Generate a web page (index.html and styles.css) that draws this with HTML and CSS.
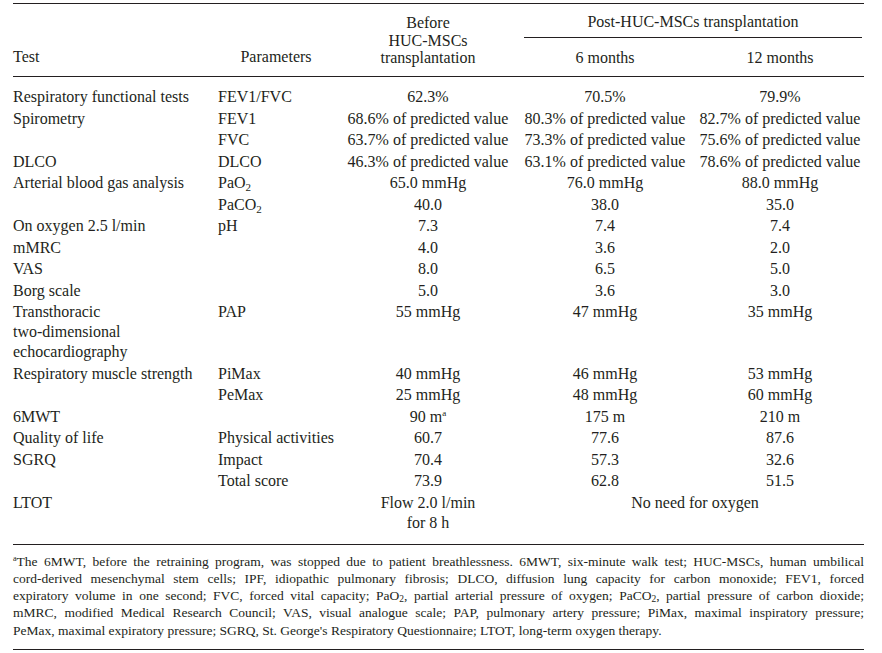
FILE: index.html
```html
<!DOCTYPE html>
<html>
<head>
<meta charset="utf-8">
<link rel="stylesheet" href="styles.css">
</head>
<body>
<div class="page">
<table class="data">
<colgroup>
<col class="c-test"><col class="c-param"><col class="c-before"><col class="c-six"><col class="c-twelve">
</colgroup>
<thead>
<tr class="h1">
<th rowspan="2" class="h-test">Test</th>
<th rowspan="2" class="h-param">Parameters</th>
<th rowspan="2" class="h-before"><span class="ln">Before</span><span class="ln">HUC-MSCs</span><span class="ln">transplantation</span></th>
<th colspan="2" class="h-post"><div class="post-label">Post-HUC-MSCs transplantation</div></th>
</tr>
<tr class="h2">
<th class="h-six">6 months</th>
<th class="h-twelve">12 months</th>
</tr>
</thead>
<tbody>
<tr class="first"><td>Respiratory functional tests</td><td>FEV1/FVC</td><td class="v">62.3%</td><td class="v">70.5%</td><td class="v v12">79.9%</td></tr>
<tr><td>Spirometry</td><td>FEV1</td><td class="v">68.6% of predicted value</td><td class="v">80.3% of predicted value</td><td class="v v12">82.7% of predicted value</td></tr>
<tr><td></td><td>FVC</td><td class="v">63.7% of predicted value</td><td class="v">73.3% of predicted value</td><td class="v v12">75.6% of predicted value</td></tr>
<tr><td>DLCO</td><td>DLCO</td><td class="v">46.3% of predicted value</td><td class="v">63.1% of predicted value</td><td class="v v12">78.6% of predicted value</td></tr>
<tr><td>Arterial blood gas analysis</td><td>PaO<sub>2</sub></td><td class="v">65.0 mmHg</td><td class="v">76.0 mmHg</td><td class="v v12">88.0 mmHg</td></tr>
<tr><td></td><td>PaCO<sub>2</sub></td><td class="v">40.0</td><td class="v">38.0</td><td class="v v12">35.0</td></tr>
<tr><td>On oxygen 2.5 l/min</td><td>pH</td><td class="v">7.3</td><td class="v">7.4</td><td class="v v12">7.4</td></tr>
<tr><td>mMRC</td><td></td><td class="v">4.0</td><td class="v">3.6</td><td class="v v12">2.0</td></tr>
<tr><td>VAS</td><td></td><td class="v">8.0</td><td class="v">6.5</td><td class="v v12">5.0</td></tr>
<tr><td>Borg scale</td><td></td><td class="v">5.0</td><td class="v">3.6</td><td class="v v12">3.0</td></tr>
<tr><td>Transthoracic<br>two-dimensional<br>echocardiography</td><td>PAP</td><td class="v">55 mmHg</td><td class="v">47 mmHg</td><td class="v v12">35 mmHg</td></tr>
<tr><td>Respiratory muscle strength</td><td>PiMax</td><td class="v">40 mmHg</td><td class="v">46 mmHg</td><td class="v v12">53 mmHg</td></tr>
<tr><td></td><td>PeMax</td><td class="v">25 mmHg</td><td class="v">48 mmHg</td><td class="v v12">60 mmHg</td></tr>
<tr><td>6MWT</td><td></td><td class="v">90 m<sup>a</sup></td><td class="v">175 m</td><td class="v v12">210 m</td></tr>
<tr><td>Quality of life</td><td>Physical activities</td><td class="v">60.7</td><td class="v">77.6</td><td class="v v12">87.6</td></tr>
<tr><td>SGRQ</td><td>Impact</td><td class="v">70.4</td><td class="v">57.3</td><td class="v v12">32.6</td></tr>
<tr><td></td><td>Total score</td><td class="v">73.9</td><td class="v">62.8</td><td class="v v12">51.5</td></tr>
<tr class="last"><td>LTOT</td><td></td><td class="v">Flow 2.0 l/min<br>for 8 h</td><td class="v span" colspan="2">No need for oxygen</td></tr>
</tbody>
</table>
<div class="notes">
<div class="nl"><sup>a</sup>The 6MWT, before the retraining program, was stopped due to patient breathlessness. 6MWT, six-minute walk test; HUC-MSCs, human umbilical</div>
<div class="nl">cord-derived mesenchymal stem cells; IPF, idiopathic pulmonary fibrosis; DLCO, diffusion lung capacity for carbon monoxide; FEV1, forced</div>
<div class="nl">expiratory volume in one second; FVC, forced vital capacity; PaO<sub>2</sub>, partial arterial pressure of oxygen; PaCO<sub>2</sub>, partial pressure of carbon dioxide;</div>
<div class="nl">mMRC, modified Medical Research Council; VAS, visual analogue scale; PAP, pulmonary artery pressure; PiMax, maximal inspiratory pressure;</div>
<div class="nl end">PeMax, maximal expiratory pressure; SGRQ, St. George's Respiratory Questionnaire; LTOT, long-term oxygen therapy.</div>
</div>
</div>
</body>
</html>
```
FILE: styles.css
```css
html, body {
  margin: 0;
  padding: 0;
  background: #ffffff;
}
body {
  font-family: "Liberation Serif", "Times New Roman", serif;
  color: #231f20;
}
.page {
  padding: 3px 0 0 13px;
  width: 851px;
}
.data {
  width: 851px;
  border-collapse: collapse;
  table-layout: fixed;
  font-size: 16px;
  line-height: 20px;
  border-top: 1px solid #231f20;
}
.c-test { width: 205px; }
.c-param { width: 116px; }
.c-before { width: 188px; }
.c-six { width: 166px; }
.c-twelve { width: 176px; }

th {
  font-weight: normal;
  padding: 0;
}
thead {
  border-bottom: 1px solid #231f20;
}
.h-test {
  text-align: left;
  vertical-align: bottom;
  padding-bottom: 9px;
}
.h-param {
  text-align: center;
  vertical-align: bottom;
  padding-bottom: 9px;
}
.h-before {
  text-align: center;
  vertical-align: top;
  padding-top: 10px;
  line-height: 17.5px;
}
.h-before .ln {
  display: block;
}
.h-post {
  text-align: center;
  padding: 8px 0 0 0;
  vertical-align: top;
}
.post-label {
  margin: 0 2px 0 2px;
  padding-bottom: 5px;
  border-bottom: 1px solid #231f20;
}
.h2 th {
  padding: 10px 0 8px 0;
  text-align: center;
}
.h-twelve {
  padding-left: 8px !important;
}

td {
  padding: 0.75px 0;
  vertical-align: top;
  text-align: left;
  white-space: nowrap;
}
td.v {
  text-align: center;
}
td.v12 {
  padding-left: 8px;
}
td.span {
  padding-left: 4px;
}
tr.first td {
  padding-top: 10px;
}
tr.last td {
  padding-bottom: 11.5px;
}
tbody {
  border-bottom: 1px solid #231f20;
}
sub {
  font-size: 11px;
  line-height: 0;
  vertical-align: -3px;
}
sup {
  font-size: 9px;
  line-height: 0;
  vertical-align: 6px;
}

.notes {
  font-size: 13.5px;
  line-height: 17.3px;
  padding: 7.5px 0 10px 0;
  border-bottom: 1px solid #231f20;
}
.nl {
  text-align: justify;
  text-align-last: justify;
  white-space: nowrap;
}
.nl.end {
  text-align-last: left;
}
.notes sup {
  font-size: 8px;
  vertical-align: 5px;
}
.notes sub {
  font-size: 9.5px;
  vertical-align: -2px;
}
```
